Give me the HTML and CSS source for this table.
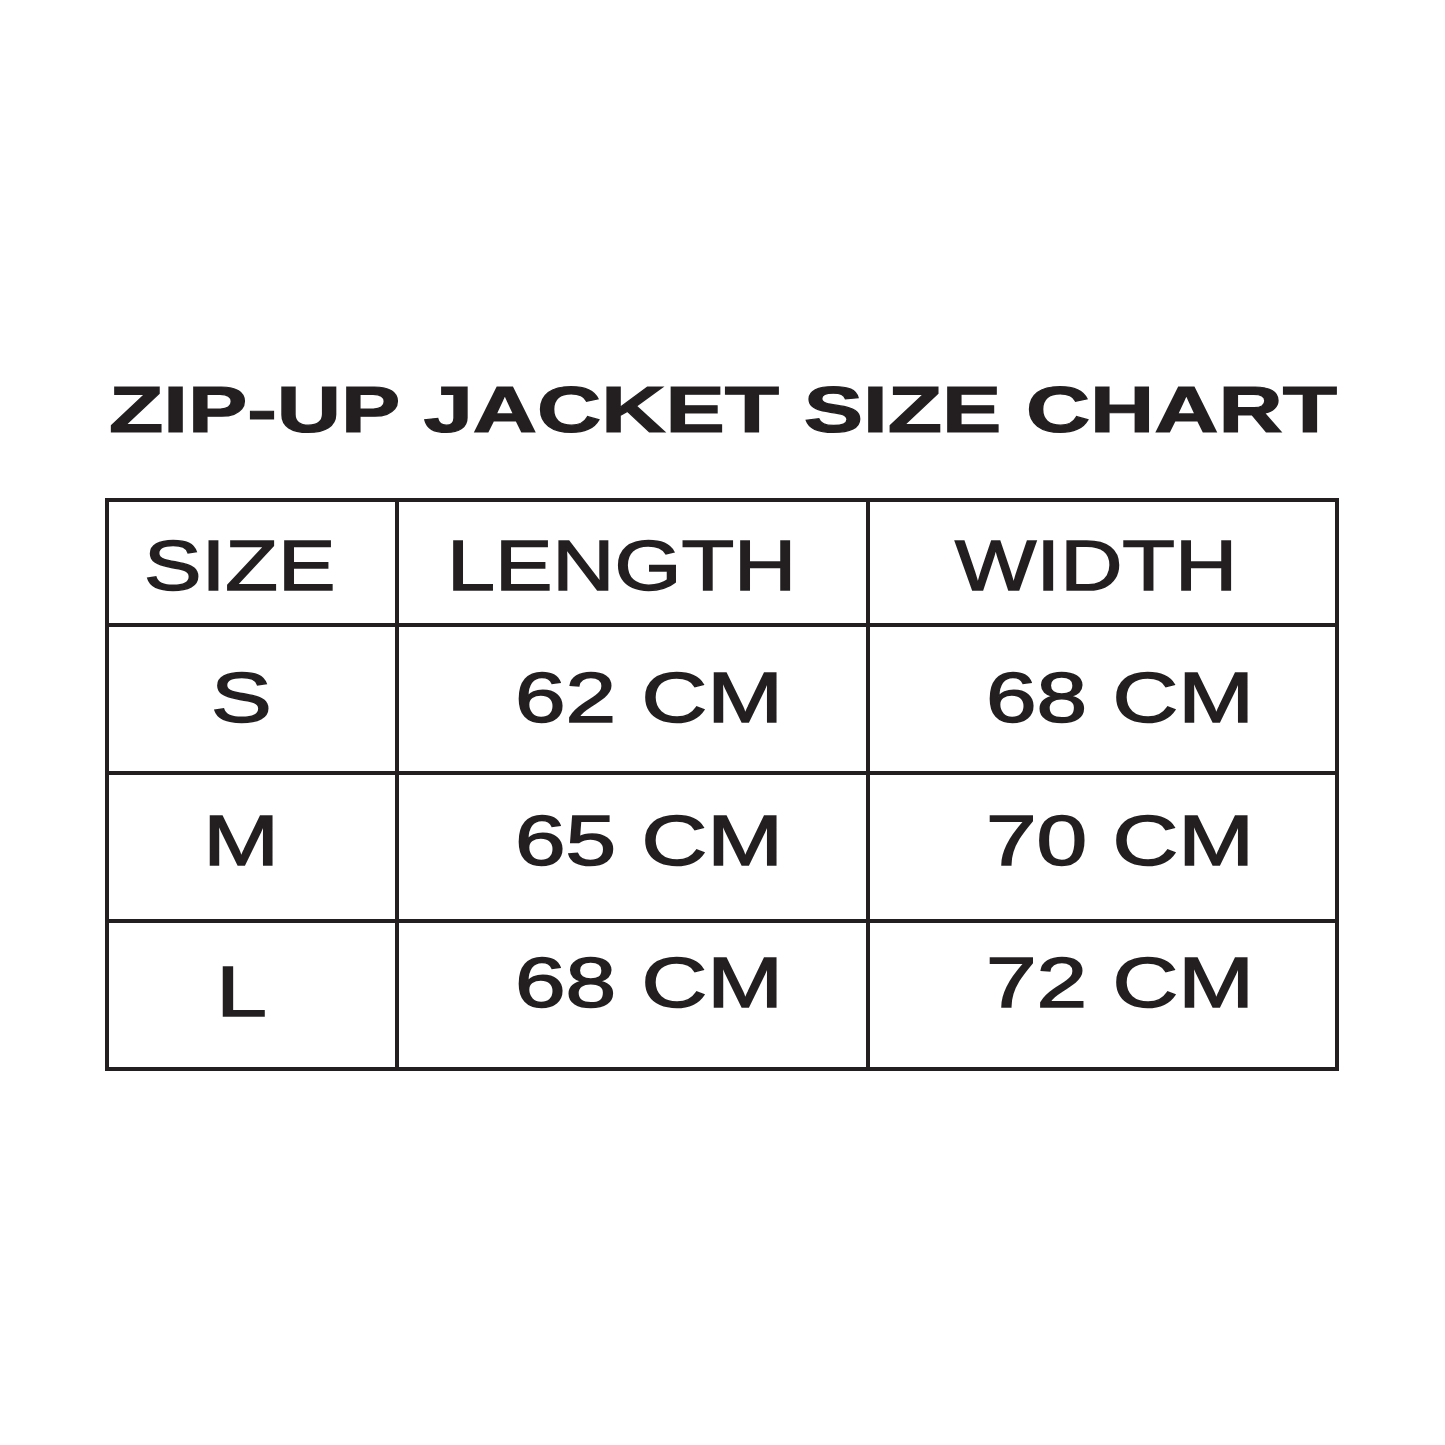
FILE: index.html
```html
<!DOCTYPE html>
<html lang="en">
<head>
<meta charset="utf-8">
<title>Zip-Up Jacket Size Chart</title>
<link rel="stylesheet" href="styles.css">
</head>
<body>
<main class="page">
  <h1 class="title"><span class="title-text">ZIP-UP JACKET SIZE CHART</span></h1>
  <div class="chart">
    <div class="cell head c1"><span class="txt">SIZE</span></div>
    <div class="cell head c2"><span class="txt">LENGTH</span></div>
    <div class="cell head c3"><span class="txt">WIDTH</span></div>

    <div class="cell r1 c1 size"><span class="txt">S</span></div>
    <div class="cell r1 c2"><span class="txt">62 CM</span></div>
    <div class="cell r1 c3"><span class="txt">68 CM</span></div>

    <div class="cell r2 c1 size"><span class="txt">M</span></div>
    <div class="cell r2 c2"><span class="txt">65 CM</span></div>
    <div class="cell r2 c3"><span class="txt">70 CM</span></div>

    <div class="cell r3 c1 size low"><span class="txt">L</span></div>
    <div class="cell r3 c2"><span class="txt">68 CM</span></div>
    <div class="cell r3 c3"><span class="txt">72 CM</span></div>
  </div>
</main>
</body>
</html>
```
FILE: styles.css
```css
html, body {
  margin: 0;
  padding: 0;
  background: #ffffff;
}

body {
  width: 1445px;
  height: 1445px;
  font-family: "Liberation Sans", Arial, sans-serif;
  color: #231f20;
}

.page {
  padding: 377px 0 0 105px;
}

.title {
  margin: 0 0 55px 0;
  padding-left: 4px;
  font-size: 65.6px;
  line-height: 1;
  font-weight: 700;
  white-space: nowrap;
}

.title-text {
  display: inline-block;
  transform: scaleX(1.355);
  transform-origin: left center;
  -webkit-text-stroke: 1.2px #231f20;
}

.chart {
  display: grid;
  grid-template-columns: 286px 467px 465px;
  grid-template-rows: 121px 144px 144px 144px;
  gap: 4px;
  padding: 4px;
  width: max-content;
  background: #231f20;
}

.cell {
  background: #ffffff;
  display: flex;
  align-items: flex-start;
  font-size: 70px;
  line-height: 1;
  white-space: nowrap;
}

.txt {
  display: inline-block;
  transform: scaleX(1.3);
  transform-origin: left center;
  -webkit-text-stroke: 1.5px #231f20;
}

.head .txt {
  transform: scaleX(1.23);
}

.head { padding-top: 29px; }
.r1 { padding-top: 36px; }
.r2 { padding-top: 31px; }
.r3 { padding-top: 25px; }
.r3.low { padding-top: 34px; }

.head.c1 { padding-left: 35px; }
.head.c2 { padding-left: 48px; }
.head.c3 { padding-left: 85px; }

.c2, .c3 { padding-left: 116px; }

.size {
  justify-content: center;
  padding-left: 0;
  padding-right: 22px;
}

.size .txt {
  transform-origin: center center;
}
```
